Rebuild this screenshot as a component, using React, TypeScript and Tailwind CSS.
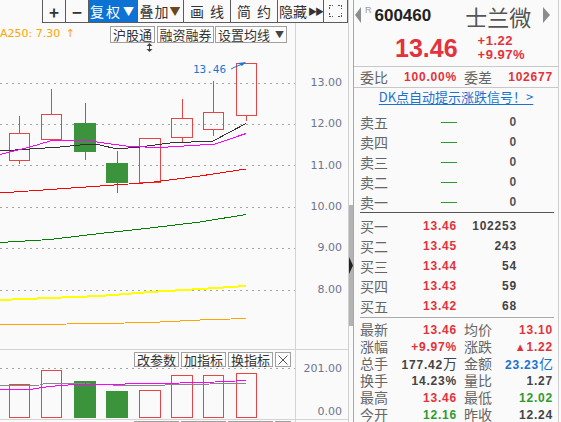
import React from "react";

type Candle = { l: number; r: number; hi: number; top: number; bot: number; lo: number; up: boolean };

const candles: Candle[] = [
  { l: 9, r: 29, hi: 116, top: 133, bot: 160, lo: 164, up: true },
  { l: 41, r: 61, hi: 89, top: 114, bot: 139, lo: 141, up: true },
  { l: 74, r: 95, hi: 103, top: 123, bot: 151, lo: 160, up: false },
  { l: 106, r: 127, hi: 151, top: 163, bot: 182, lo: 193, up: false },
  { l: 139, r: 160, hi: 138, top: 138, bot: 182, lo: 182, up: true },
  { l: 171, r: 192, hi: 99, top: 118, bot: 137, lo: 142, up: true },
  { l: 203, r: 223, hi: 81, top: 112, bot: 129, lo: 136, up: true },
  { l: 236, r: 256, hi: 63, top: 63, bot: 115, lo: 121, up: true },
];

const vols = [
  { l: 9, r: 29, top: 384, up: true },
  { l: 41, r: 61, top: 370, up: true },
  { l: 74, r: 95, top: 381, up: false },
  { l: 106, r: 127, top: 391, up: false },
  { l: 139, r: 160, top: 390, up: true },
  { l: 171, r: 192, top: 375, up: true },
  { l: 203, r: 223, top: 375, up: true },
  { l: 236, r: 256, top: 373, up: true },
];

const ma = {
  black: [[0, 151], [30, 149], [60, 147], [85, 144.5], [100, 145], [117, 149], [140, 147], [170, 143], [213, 141], [230, 132], [246, 123.5]],
  magenta: [[0, 154.5], [30, 147], [50, 141], [85, 140], [100, 142.5], [130, 146.5], [160, 147.5], [200, 145], [215, 144], [246, 133.5]],
  red: [[0, 193], [50, 189.5], [100, 186], [150, 182.5], [200, 176], [246, 169]],
  green: [[0, 242.5], [50, 239.5], [100, 233.5], [150, 228], [200, 222], [246, 214.5]],
  yellow: [[0, 300], [50, 298], [100, 296], [150, 292], [200, 289], [246, 286]],
  orange: [[0, 325], [100, 323.5], [150, 322.5], [200, 320], [246, 318.5]],
};

const volMa = {
  gray: [[0, 385.5], [40, 385], [46, 383], [70, 383], [100, 384.5], [125, 385.5], [150, 385.5], [180, 384.5], [210, 384], [246, 383.5]],
  magenta: [[0, 390], [30, 389.5], [42, 387.5], [60, 385.5], [85, 384], [110, 384.5], [140, 383.5], [180, 383], [215, 382], [246, 380.5]],
};

const pts = (a: number[][]) => a.map((p) => p.join(",")).join(" ");

const RED = "#e64546";
const GREEN = "#3b943b";

function CandleMark({ c }: { c: Candle }) {
  const cx = Math.round((c.l + c.r) / 2) + 0.5;
  const color = c.up ? RED : GREEN;
  return (
    <g shapeRendering="crispEdges">
      {c.hi < c.top && <line x1={cx} x2={cx} y1={c.hi} y2={c.top} stroke={color} />}
      {c.lo > c.bot && <line x1={cx} x2={cx} y1={c.bot} y2={c.lo} stroke={color} />}
      {c.up ? (
        <rect x={c.l + 0.5} y={c.top + 0.5} width={c.r - c.l} height={c.bot - c.top} fill="none" stroke={color} />
      ) : (
        <rect x={c.l} y={c.top} width={c.r - c.l + 1} height={c.bot - c.top + 1} fill={color} />
      )}
    </g>
  );
}

const CJK = "font-['Noto_Sans_CJK_SC',sans-serif]";
const NUM = "font-['Liberation_Sans','Noto_Sans_CJK_SC',sans-serif] font-bold text-[12px] tracking-[0.8px]";
const LABEL = "font-['Noto_Sans_CJK_SC',sans-serif] text-[14px] text-[#666] leading-[17px]";

function Toolbar() {
  const btn = "h-full flex items-center justify-center border-l border-[#5c5c5c] text-[14px] leading-none text-[#333] " + CJK;
  return (
    <div className="flex h-[23px] shrink-0">
      <div className="w-[43px]" />
      <div className="flex border-b border-r border-[#5c5c5c] h-[23px]">
        <div className={btn + " w-[23px] font-bold !text-[17px]"}>+</div>
        <div className={btn + " w-[23px] font-bold !text-[17px]"}>−</div>
        <div className={btn + " w-[49px] bg-[#0c73d5] !text-white tracking-[2px]"}>
          复权<span className="text-[11px] ml-[1px]">▼</span>
        </div>
        <div className={btn + " w-[46px] tracking-[1px]"}>
          叠加<span className="text-[11px] text-[#6b4420]">▼</span>
        </div>
        <div className={btn + " w-[47px] tracking-[6px] pl-[6px]"}>画线</div>
        <div className={btn + " w-[47px] tracking-[6px] pl-[6px]"}>简约</div>
        <div className={btn + " w-[46px]"}>
          隐藏<span className="text-[9px] tracking-[-2px] ml-[1px]">▶▶</span>
        </div>
        <div className={btn + " w-[24px]"}>
          <svg width="13" height="12" viewBox="0 0 13 12" shapeRendering="crispEdges">
            <g stroke="#555" fill="none" strokeDasharray="2 1">
              <polyline points="0.5,4 0.5,0.5 4,0.5" />
              <polyline points="9,0.5 12.5,0.5 12.5,4" />
              <polyline points="0.5,8 0.5,11.5 4,11.5" />
              <polyline points="9,11.5 12.5,11.5 12.5,8" />
            </g>
          </svg>
        </div>
      </div>
    </div>
  );
}

function MainChart() {
  const grid = [82.5, 123.5, 165, 206.5, 248, 289.5];
  const box = "h-full flex items-center justify-center border border-[#a0a0a0] bg-[#fdfdfd] text-[13px] text-[#333] leading-none " + CJK;
  return (
    <div className="relative flex h-[327px] shrink-0 border-b border-[#d4d4d4]">
      <svg width="295" height="326" viewBox="0 23 295 326">
        {grid.map((y) => (
          <line key={y} x1="0" x2="295" y1={Math.round(y) + 0.5} y2={Math.round(y) + 0.5} stroke="#a5a5a5" strokeDasharray="2 4" />
        ))}
        {candles.map((c, i) => (
          <CandleMark key={i} c={c} />
        ))}
        <g fill="none" shapeRendering="crispEdges">
          <polyline points={pts(ma.orange)} stroke="#ffa500" />
          <polyline points={pts(ma.yellow)} stroke="#ffff00" strokeWidth="2" />
          <polyline points={pts(ma.green)} stroke="#008000" />
          <polyline points={pts(ma.red)} stroke="#ff0000" />
          <polyline points={pts(ma.black)} stroke="#333" />
          <polyline points={pts(ma.magenta)} stroke="#ff00ff" />
        </g>
        <text x="193" y="73" fontFamily="DejaVu Sans Mono" fontSize="11" fill="#1a78d4">13.46</text>
        <polyline points="231,69 235,67 245,63" fill="none" stroke="#1a78d4" />
        <polygon points="238,63 246,62 242,66" fill="#1a78d4" />
        <g fill="#444">
          <polygon points="149.5,43 146.5,46 152.5,46" />
          <rect x="149" y="46" width="1" height="3" />
          <polygon points="149.5,52 146.5,49 152.5,49" />
        </g>
      </svg>
      <div className="relative w-[53px] border-l border-[#d4d4d4] font-['DejaVu_Sans',sans-serif] text-[11px] text-[#6f7590] leading-[14px]">
        <div className="absolute right-[6px] top-[53px]">13.00</div>
        <div className="absolute right-[6px] top-[94px]">12.00</div>
        <div className="absolute right-[6px] top-[136px]">11.00</div>
        <div className="absolute right-[6px] top-[177px]">10.00</div>
        <div className="absolute right-[6px] top-[218px]">9.00</div>
        <div className="absolute right-[6px] top-[260px]">8.00</div>
      </div>
      <div className="absolute left-0 top-[4px] text-[11px] leading-[14px] text-[#ffa500] font-['DejaVu_Sans',sans-serif]">
        A250: 7.30 <span className="ml-[2px]">↑</span>
      </div>
      <div className="absolute left-[110px] top-[3px] h-[17px] flex gap-[1px]">
        <div className={box + " w-[45px]"}>沪股通</div>
        <div className={box + " w-[57px] ml-[1px]"}>融资融券</div>
        <div className={box + " w-[72px] gap-[5px]"}>
          设置均线<span className="text-[9px] text-[#444]">▼</span>
        </div>
      </div>
    </div>
  );
}

function IndicatorButtons({ className }: { className: string }) {
  const box = "h-full flex items-center justify-center border border-[#a0a0a0] bg-[#fdfdfd] text-[13px] text-[#333] leading-none " + CJK;
  return (
    <div className={"absolute left-[134px] flex gap-[2px] " + className}>
      <div className={box + " w-[45px]"}>改参数</div>
      <div className={box + " w-[45px]"}>加指标</div>
      <div className={box + " w-[45px]"}>换指标</div>
      <div className={box + " w-[16px] text-[#555]"}>
        <svg width="10" height="10" viewBox="0 0 10 10">
          <path d="M0.5 0.5 L9.5 9.5 M9.5 0.5 L0.5 9.5" stroke="#555" />
        </svg>
      </div>
    </div>
  );
}

function VolChart() {
  return (
    <div className="relative flex h-[70px] shrink-0 border-b border-[#d4d4d4]">
      <svg width="295" height="69" viewBox="0 350 295 69">
        <line x1="0" x2="295" y1="368.5" y2="368.5" stroke="#a5a5a5" strokeDasharray="2 4" />
        {vols.map((v, i) =>
          v.up ? (
            <rect key={i} x={v.l + 0.5} y={v.top + 0.5} width={v.r - v.l} height={417 - v.top} fill="none" stroke={RED} shapeRendering="crispEdges" />
          ) : (
            <rect key={i} x={v.l} y={v.top} width={v.r - v.l + 1} height={418 - v.top} fill={GREEN} />
          )
        )}
        <g fill="none" shapeRendering="crispEdges">
          <polyline points={pts(volMa.gray)} stroke="#888" />
          <polyline points={pts(volMa.magenta)} stroke="#ff00ff" />
        </g>
      </svg>
      <div className="relative w-[53px] border-l border-[#d4d4d4] font-['DejaVu_Sans',sans-serif] text-[11px] text-[#6f7590] leading-[14px]">
        <div className="absolute right-[6px] top-[12px]">201.00</div>
        <div className="absolute right-[6px] top-[55px]">0.00</div>
      </div>
      <IndicatorButtons className="top-[2px] h-[15px]" />
    </div>
  );
}

function Scrollbar() {
  return (
    <div className="relative w-[5px] border-l border-[#cfcfcf] flex flex-col">
      <div className="h-[205px] shrink-0" />
      <div className="h-[121px] shrink-0 bg-[#b3b3b3]" />
      <svg className="absolute left-0 top-[257px]" width="4" height="17" viewBox="0 0 4 17">
        <polygon points="0,0 4,8.5 0,17" fill="#222" />
      </svg>
    </div>
  );
}

const sells = ["卖五", "卖四", "卖三", "卖二", "卖一"];
const buys = [
  ["买一", "13.46", "102253"],
  ["买二", "13.45", "243"],
  ["买三", "13.44", "54"],
  ["买四", "13.43", "59"],
  ["买五", "13.42", "68"],
];

function StatRow({ a, av, b, bv }: { a: string; av: React.ReactNode; b: string; bv: React.ReactNode }) {
  return (
    <div className="flex items-center h-[17px] shrink-0 pl-[6px]">
      <span className={LABEL + " w-[40px]"}>{a}</span>
      <span className={NUM + " w-[57px] text-right"}>{av}</span>
      <span className={LABEL + " w-[40px] ml-[7px]"}>{b}</span>
      <span className={NUM + " w-[49px] text-right"}>{bv}</span>
    </div>
  );
}

function QuotePanel() {
  return (
    <div className="flex-1 flex flex-col overflow-hidden border-l border-[#a8a8a8] border-r border-r-[#cfcfcf] mr-[2px]">
      <div className="flex items-center h-[30px] shrink-0">
        <svg className="ml-[1px]" width="6" height="16" viewBox="0 0 6 16">
          <polygon points="6,0 0,8 6,16" fill="#8c8c8c" />
        </svg>
        <span className="ml-[4px] self-start mt-[6px] text-[9px] text-[#999] leading-none font-['Liberation_Sans',sans-serif]">R</span>
        <span className="ml-[3px] text-[17px] font-bold text-[#222] leading-none font-['Liberation_Sans',sans-serif]">600460</span>
        <span className={"ml-[34px] text-[22px] text-[#555] leading-none mt-[2px] " + CJK}>士兰微</span>
        <svg className="ml-[12px]" width="7" height="16" viewBox="0 0 7 16">
          <polygon points="0,0 7,8 0,16" fill="#8c8c8c" />
        </svg>
      </div>
      <div className="flex items-center h-[37px] shrink-0 border-b border-[#c8c8c8] pl-[41px] font-['Liberation_Sans',sans-serif] text-[#e3323b]">
        <span className="text-[25px] font-bold leading-none">13.46</span>
        <div className="ml-[20px] flex flex-col text-[13px] font-bold leading-[14px] tracking-[0.5px]">
          <span>+1.22</span>
          <span>+9.97%</span>
        </div>
      </div>
      <div className="flex items-center h-[21px] shrink-0 border-b border-[#c8c8c8] pl-[6px]">
        <span className={LABEL + " w-[40px]"}>委比</span>
        <span className={NUM + " w-[57px] text-right text-[#e3323b]"}>100.00%</span>
        <span className={LABEL + " w-[40px] ml-[7px]"}>委差</span>
        <span className={NUM + " w-[49px] text-right text-[#e3323b]"}>102677</span>
      </div>
      <div className="flex items-center justify-center h-[18px] shrink-0">
        <span className={"text-[13px] leading-[16px] text-[#1a72d0] underline underline-offset-2 " + CJK}>DK点自动提示涨跌信号！&gt;</span>
      </div>
      <div className="flex flex-col mt-[6px] shrink-0">
        {sells.map((s) => (
          <div key={s} className="flex items-center h-[20px] pl-[6px]">
            <span className={LABEL + " w-[40px]"}>{s}</span>
            <span className="w-[57px] flex justify-end">
              <span className="w-[16px] h-[1px] bg-[#2e9a2e]" />
            </span>
            <span className={NUM + " w-[60px] text-right text-[#555]"}>0</span>
          </div>
        ))}
      </div>
      <div className="h-[1px] shrink-0 bg-[#555] ml-[6px] mr-[4px]" />
      <div className="flex flex-col mt-[3px] shrink-0">
        {buys.map(([l, p, v]) => (
          <div key={l} className="flex items-center h-[20px] pl-[6px]">
            <span className={LABEL + " w-[40px]"}>{l}</span>
            <span className={NUM + " w-[57px] text-right text-[#e3323b]"}>{p}</span>
            <span className={NUM + " w-[60px] text-right text-[#444]"}>{v}</span>
          </div>
        ))}
      </div>
      <div className="h-[1px] shrink-0 bg-[#aaa] mt-[1px] ml-[6px] mr-[4px]" />
      <div className="flex flex-col mt-[3px] shrink-0">
        <StatRow a="最新" av={<span className="text-[#e3323b]">13.46</span>} b="均价" bv={<span className="text-[#e3323b]">13.10</span>} />
        <StatRow a="涨幅" av={<span className="text-[#e3323b]">+9.97%</span>} b="涨跌" bv={<span className="text-[#e3323b]"><span className="text-[11px]">▲</span>1.22</span>} />
        <StatRow
          a="总手"
          av={<span className="text-[#444]">177.42<span className={"font-normal text-[14px] tracking-normal " + CJK}>万</span></span>}
          b="金额"
          bv={<span className="text-[#1a72d0]">23.23<span className={"font-normal text-[14px] tracking-normal " + CJK}>亿</span></span>}
        />
        <StatRow a="换手" av={<span className="text-[#444]">14.23%</span>} b="量比" bv={<span className="text-[#444]">1.27</span>} />
        <StatRow a="最高" av={<span className="text-[#e3323b]">13.46</span>} b="最低" bv={<span className="text-[#2e9a2e]">12.02</span>} />
        <StatRow a="今开" av={<span className="text-[#2e9a2e]">12.16</span>} b="昨收" bv={<span className="text-[#444]">12.24</span>} />
      </div>
    </div>
  );
}

export default function App() {
  return (
    <div className="w-[561px] h-[422px] overflow-hidden bg-[#fafafa] flex">
      <div className="w-[348px] flex flex-col">
        <Toolbar />
        <MainChart />
        <VolChart />
        <div className="relative flex flex-1">
          <div className="w-[295px]" />
          <div className="flex-1 border-l border-[#d4d4d4]" />
          <IndicatorButtons className="top-[1px] h-[15px]" />
        </div>
      </div>
      <Scrollbar />
      <QuotePanel />
    </div>
  );
}
